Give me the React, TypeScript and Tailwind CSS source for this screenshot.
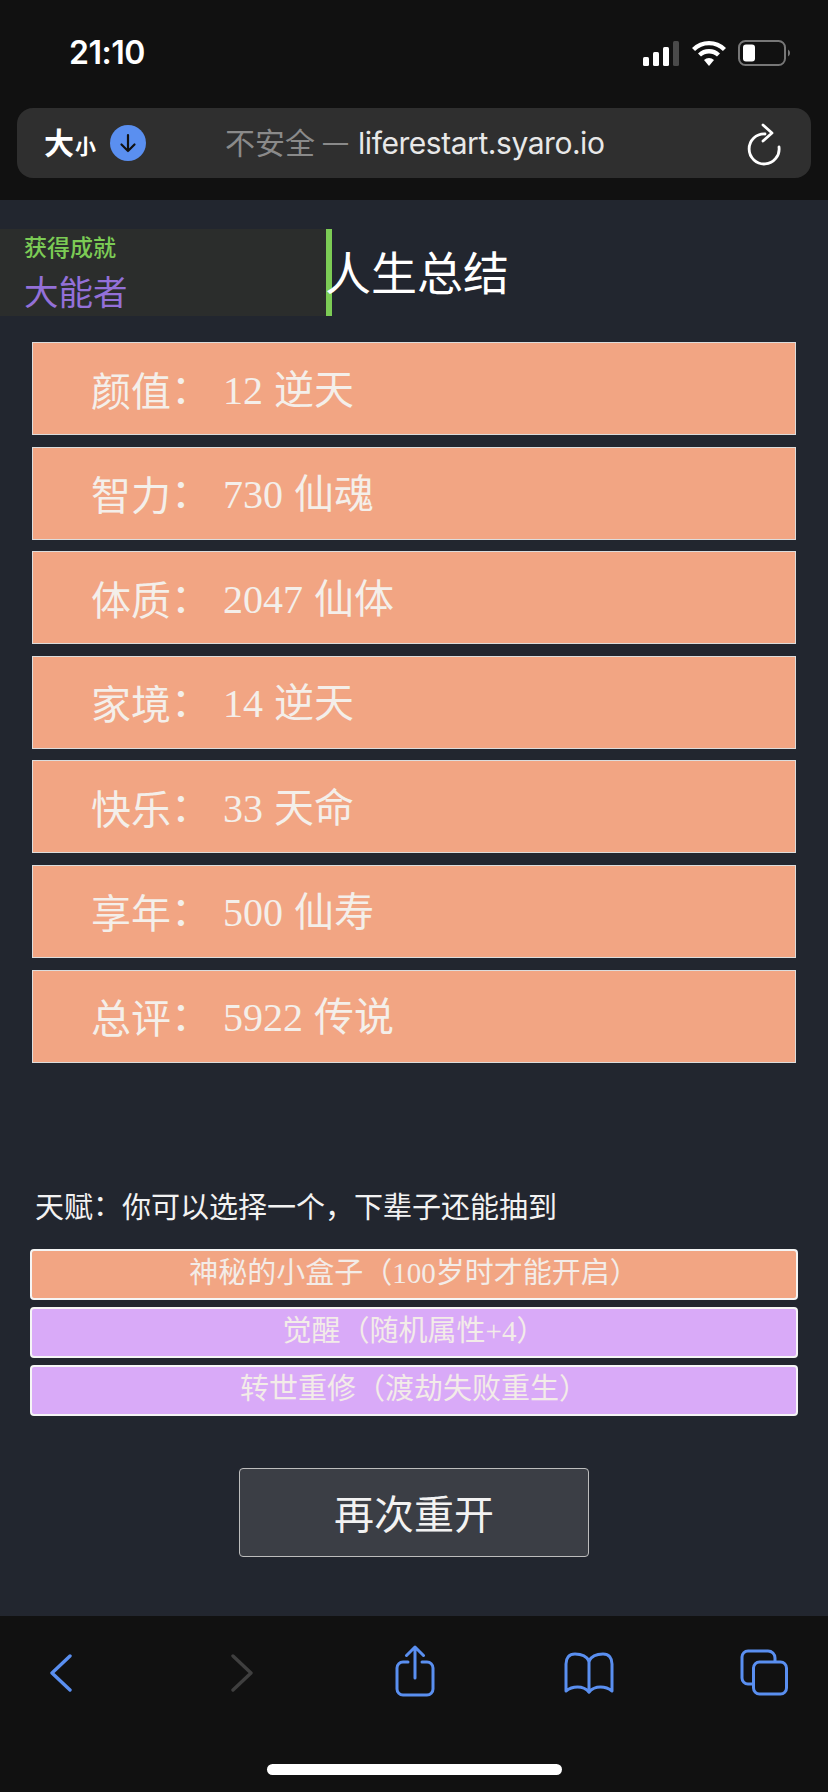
const rows = [
  ["颜值", "12 逆天"],
  ["智力", "730 仙魂"],
  ["体质", "2047 仙体"],
  ["家境", "14 逆天"],
  ["快乐", "33 天命"],
  ["享年", "500 仙寿"],
  ["总评", "5922 传说"],
];

const talents = [
  ["神秘的小盒子（100岁时才能开启）", "bg-[#f2a583]"],
  ["觉醒（随机属性+4）", "bg-[#d9aaf8]"],
  ["转世重修（渡劫失败重生）", "bg-[#d9aaf8]"],
];

const blue = "#5a8ff0";

export default function App() {
  return (
    <div className="w-[828px] h-[1792px] flex flex-col overflow-hidden bg-[#22262f] font-['Liberation_Serif','Noto_Sans_CJK_SC',serif]">
      {/* Browser header */}
      <div className="h-[200px] bg-[#111111] flex flex-col shrink-0 font-['Inter','Noto_Sans_CJK_SC',sans-serif]">
        <div className="h-[108px] flex pt-[35px] pl-[69px] pr-[37px] justify-between items-start">
          <span className="text-[32px] leading-[35px] font-semibold text-white tracking-[-0.5px]">21:10</span>
          <div className="flex items-center gap-[12px] pt-[5px]">
            <svg width="37" height="25" viewBox="0 0 37 25">
              <rect x="0" y="16" width="6" height="9" rx="1.5" fill="#fff" />
              <rect x="10" y="11" width="6" height="14" rx="1.5" fill="#fff" />
              <rect x="20" y="6" width="6" height="19" rx="1.5" fill="#fff" />
              <rect x="30" y="0" width="6" height="25" rx="1.5" fill="#4a4a4a" />
            </svg>
            <svg width="34" height="26" viewBox="0 0 34 26">
              <path d="M1.5 9.5 A22 22 0 0 1 32.5 9.5" fill="none" stroke="#fff" strokeWidth="4.4" />
              <path d="M7.5 15 A14 14 0 0 1 26.5 15" fill="none" stroke="#fff" strokeWidth="4.4" />
              <path d="M12 20 A7.5 7.5 0 0 1 22 20 L17 26 Z" fill="#fff" />
            </svg>
            <svg width="53" height="26" viewBox="0 0 53 26">
              <rect x="1" y="1" width="46" height="24" rx="6.5" fill="none" stroke="#777" strokeWidth="2" />
              <rect x="5" y="4.5" width="12" height="17" rx="3" fill="#fff" />
              <path d="M50 9.5 A4 4 0 0 1 50 16.5 Z" fill="#777" />
            </svg>
          </div>
        </div>
        <div className="mx-[17px] h-[70px] rounded-[16px] bg-[#2f2f2f] flex items-center pl-[27px] pr-[26px]">
          <span className="text-white font-bold text-[30px] leading-none">大</span>
          <span className="text-white font-bold text-[21px] leading-none mt-[6px] ml-[1px]">小</span>
          <span className="ml-[14px] w-[36px] h-[36px] rounded-full bg-[#5a8ff0] flex items-center justify-center">
            <svg width="20" height="22" viewBox="0 0 20 22" fill="none" stroke="#111" strokeWidth="2.2" strokeLinecap="round" strokeLinejoin="round">
              <path d="M10 3 V19 M3.5 12.5 L10 19 L16.5 12.5" />
            </svg>
          </span>
          <span className="ml-[79px] text-[30px] leading-none text-[#8a8a8a]">不安全</span>
          <span className="ml-[8px] text-[25px] leading-none text-[#8a8a8a]">—</span>
          <span className="ml-[10px] text-[30px] leading-none text-[#e8e8e8] tracking-[-0.45px]">liferestart.syaro.io</span>
          <svg className="ml-auto" width="40" height="45" viewBox="0 0 40 45" fill="none" stroke="#fff" strokeWidth="2.8" strokeLinecap="round" strokeLinejoin="round">
            <path d="M20 13 A15 15 0 1 0 34 26" />
            <path d="M18 4 L27 12 L18 20" />
          </svg>
        </div>
      </div>

      {/* Page */}
      <div className="h-[1416px] shrink-0 flex flex-col">
        <div className="mt-[29px] h-[87px] flex items-stretch">
          <div className="w-[326px] bg-[#2b2d2c] pl-[24px] pt-[2px] font-['Noto_Sans_CJK_SC',sans-serif]">
            <div className="text-[23px] leading-[30px] text-[#7ccb55] font-medium">获得成就</div>
            <div className="mt-[7px] text-[34.5px] leading-[44px] text-[#9370d8]">大能者</div>
          </div>
          <div className="w-[6px] bg-[#7ccb55]" />
          <div className="-ml-[7px] pt-[11px] text-[46px] leading-[60px] text-white font-['Noto_Sans_CJK_SC',sans-serif]">人生总结</div>
        </div>

        <div className="mt-[26px] mx-[32px] flex flex-col gap-[11.6px]">
          {rows.map(([label, value]) => (
            <div key={label} className="h-[93px] border border-[#dcdcdc] bg-[#f2a583] flex items-center pl-[58px] text-[40px] text-[#f4efea]">
              <span className="font-['Noto_Sans_CJK_SC',sans-serif] w-[132px]">
                {label}
                <span className="inline-block -translate-y-[3px]">：</span>
              </span>
              <span className="mt-[4px] [word-spacing:1px]">{value}</span>
            </div>
          ))}
        </div>

        <div className="mt-[122px] ml-[35px] h-[40px] text-[29px] leading-[40px] text-[#f2f2f2] font-['Noto_Sans_CJK_SC',sans-serif]">
          天赋<span className="inline-block -translate-y-[2px]">：</span>你可以选择一个，下辈子还能抽到
        </div>

        <div className="mt-[24px] mx-[30px] flex flex-col gap-[7px]">
          {talents.map(([text, bg]) => (
            <div key={text} className={`h-[51px] rounded-[4px] border-2 border-[#f5f5f5] flex items-center justify-center text-[29px] text-[#f3ece8] ${bg}`}>
              {text}
            </div>
          ))}
        </div>

        <div className="mt-[52px] ml-[239px] w-[350px] h-[89px] border border-[#bdbdbd] rounded-[4px] bg-[#3b3e45] flex items-center justify-center text-[40px] text-[#f2f2f2] font-['Noto_Sans_CJK_SC',sans-serif]">
          再次重开
        </div>
      </div>

      {/* Browser toolbar */}
      <div className="flex-1 bg-[#111111] flex flex-col">
        <div className="h-[148px] pt-[28px] pl-[50px] flex items-start">
          <svg className="mt-[10px]" width="22" height="38" viewBox="0 0 22 38" fill="none" stroke={blue} strokeWidth="3.4" strokeLinecap="round" strokeLinejoin="round">
            <path d="M20 2 L2 19 L20 36" />
          </svg>
          <svg className="mt-[10px] ml-[159px]" width="22" height="38" viewBox="0 0 22 38" fill="none" stroke="#3f3f3f" strokeWidth="3.4" strokeLinecap="round" strokeLinejoin="round">
            <path d="M2 2 L20 19 L2 36" />
          </svg>
          <svg className="mt-[1px] ml-[142px]" width="40" height="53" viewBox="0 0 40 53" fill="none" stroke={blue} strokeWidth="3" strokeLinecap="round" strokeLinejoin="round">
            <path d="M13 17 H8 A6 6 0 0 0 2 23 V44 A6 6 0 0 0 8 50 H32 A6 6 0 0 0 38 44 V23 A6 6 0 0 0 32 17 H27" />
            <path d="M20 33 V2 M11.5 10.5 L20 2 L28.5 10.5" />
          </svg>
          <svg className="mt-[7px] ml-[129px]" width="50" height="44" viewBox="0 0 50 44" fill="none" stroke={blue} strokeWidth="3" strokeLinecap="round" strokeLinejoin="round">
            <path d="M25 10 V41" />
            <path d="M25 10 C22 4 16 3 11 3 C5 3 2 7 2 13 V40 C8 35 19 34 25 41 C31 34 42 35 48 40 V13 C48 7 45 3 39 3 C34 3 28 4 25 10 Z" />
          </svg>
          <svg className="mt-[4px] ml-[125px]" width="50" height="49" viewBox="0 0 50 49" fill="none" stroke={blue} strokeWidth="3" strokeLinecap="round" strokeLinejoin="round">
            <path d="M13 36 H9 A6 6 0 0 1 3 30 V9 A6 6 0 0 1 9 3 H29 A7 7 0 0 1 36 10 V13" />
            <rect x="14.5" y="14" width="33" height="32" rx="6" />
          </svg>
        </div>
        <div className="mx-auto w-[295px] h-[11px] rounded-full bg-white" />
      </div>
    </div>
  );
}
